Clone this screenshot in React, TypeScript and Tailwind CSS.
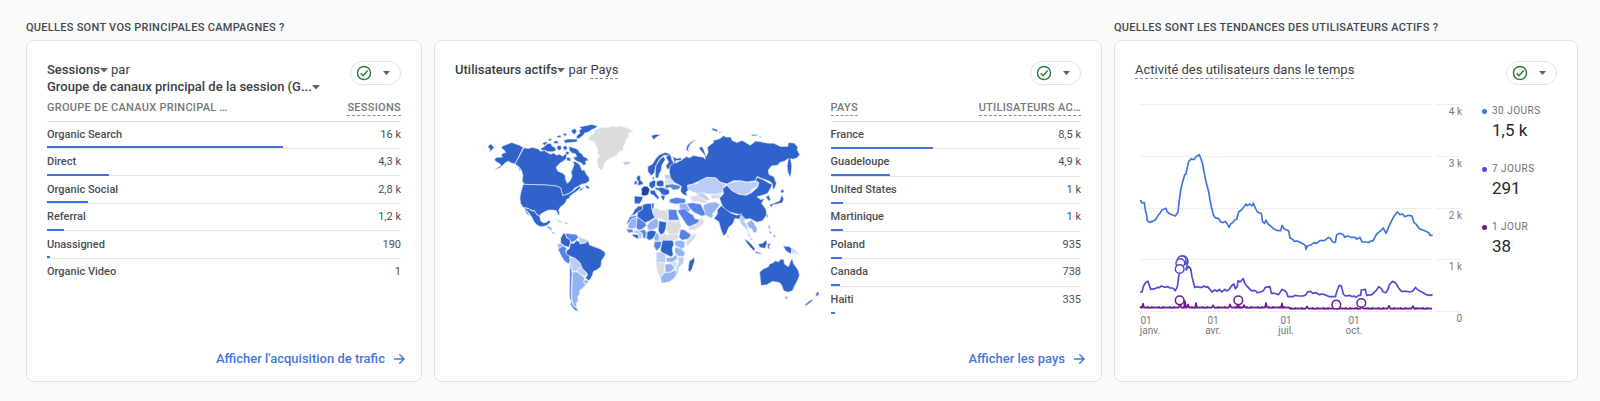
import type { ReactNode } from "react";

type Row = { label: string; value: string; share: number };

const channels: Row[] = [
  { label: "Organic Search", value: "16 k", share: 66.7 },
  { label: "Direct", value: "4,3 k", share: 17.5 },
  { label: "Organic Social", value: "2,8 k", share: 11.5 },
  { label: "Referral", value: "1,2 k", share: 4.8 },
  { label: "Unassigned", value: "190", share: 0.8 },
  { label: "Organic Video", value: "1", share: 0 },
];

const countries: Row[] = [
  { label: "France", value: "8,5 k", share: 41 },
  { label: "Guadeloupe", value: "4,9 k", share: 23.7 },
  { label: "United States", value: "1 k", share: 5 },
  { label: "Martinique", value: "1 k", share: 5 },
  { label: "Poland", value: "935", share: 4.7 },
  { label: "Canada", value: "738", share: 3.6 },
  { label: "Haiti", value: "335", share: 1.7 },
];

function Caret() {
  return (
    <svg viewBox="0 0 8 5" className="inline-block h-[5px] w-2 align-middle" aria-hidden="true">
      <path d="M0 0h8L4 4.5z" fill="#5f6368" />
    </svg>
  );
}

function StatusButton() {
  return (
    <button
      type="button"
      aria-label="Qualité des données"
      className="flex h-6 w-[51px] shrink-0 items-center justify-between rounded-full border border-[#dfe2e6] bg-white pr-[10px] pl-[5px]"
    >
      <svg viewBox="0 0 20 20" className="size-4" fill="none" stroke="#2e7d3e" strokeWidth="1.8" aria-hidden="true">
        <circle cx="10" cy="10" r="8.2" />
        <path d="M5.8 10.4l3 3 5.8-6.4" />
      </svg>
      <svg viewBox="0 0 7 4" className="h-1 w-[7px]" aria-hidden="true">
        <path d="M0 0h7L3.500 4z" fill="#5f6368" />
      </svg>
    </button>
  );
}

function FooterLink({ children }: { children: ReactNode }) {
  return (
    <a href="#" className="-mr-1 mt-auto flex items-center gap-2 self-end text-[13px] leading-4 font-medium text-[#4677dc]">
      {children}
      <svg viewBox="0 0 12 12" className="size-3" fill="none" stroke="currentColor" strokeWidth="1.400" aria-hidden="true">
        <path d="M1 6h9.800M6.300 1.300L11 6l-4.700 4.700" />
      </svg>
    </a>
  );
}

function DataTable({ rows, head, metric, dottedHead, tall }: { rows: Row[]; head: string; metric: string; dottedHead: boolean; tall: boolean }) {
  return (
    <table className={tall ? "h-[218px] w-full" : "h-[190px] w-full"}>
      <thead className="text-[11px] leading-[15px] tracking-wide text-[#74787c] uppercase">
        <tr className="h-[26px] border-b border-[#dcdfe3]">
          <th scope="col" className="text-left align-middle font-medium">
            <span className={dottedHead ? "inline-block border-b border-dashed border-[#8a8f94]" : "inline-block border-b border-transparent"}>{head}</span>
          </th>
          <th scope="col" className="text-right align-middle font-medium">
            <span className="inline-block border-b border-dashed border-[#8a8f94]">{metric}</span>
          </th>
        </tr>
      </thead>
      <tbody className="text-[11px] leading-4 text-[#4b4f53]">
        {rows.map((row, i) => (
          <tr key={row.label} className={i === rows.length - 1 ? "relative" : "relative border-b border-[#e2e4e8]"}>
            <th scope="row" className="text-left font-medium">
              {row.label}
              {row.share > 0 && (
                <span className="absolute -bottom-px left-0 h-[2px] bg-[#3f74dc]" style={{ width: `${row.share}%` }} />
              )}
            </th>
            <td className="text-right">{row.value}</td>
          </tr>
        ))}
      </tbody>
    </table>
  );
}

const DARK = "#2f63cb";
const NAVY = "#1d4596";
const MID = "#5482e6";
const SOFT = "#93b2f3";
const PALE = "#b9cdf8";
const NONE = "#dcdcdc";

/* Country outlines, grouped by map sector: [fill, path]. */
const northWest: [string, string][] = [
  [DARK, "M132 97L120 90 108 86 98 82 88 86 72 92 66 98 74 104 80 112 72 114 66 120 70 126 56 126 50 128 46 134 52 140 60 144 66 150 58 156 46 164 60 159 72 149 80 142 88 138 96 143 108 146Z"],
  [DARK, "M28 92L36 86 42 94 46 98 40 102 34 110 32 100 26 96Z"],
  [DARK, "M134 98L150 100 156 97 164 98 176 101 184 108 196 106 206 113 214 117 224 113 230 120 240 117 250 123 258 116 262 120 260 130 252 138 244 142 236 150 230 156 236 168 250 174 257 180 259 194 264 204 271 197 275 190 278 182 275 170 280 160 284 148 280 138 290 140 300 148 304 156 308 166 314 163 320 176 328 186 330 196 320 204 306 207 298 212 286 218 278 228 268 234 250 241 244 218 230 212 200 209 134 207 129 196 131 180 127 166 120 156 108 146Z"],
  [DARK, "M268 94L276 96 288 100 296 104 300 112 308 116 312 124 324 130 326 136 318 138 320 148 312 150 304 142 296 140 286 134 282 126 292 124 288 116 278 114 270 106Z"],
  [DARK, "M192 96L204 86 214 84 218 92 228 98 230 106 220 110 206 110 198 106 188 106 184 100Z"],
  [DARK, "M188 86L198 80 206 82 196 90Z M206 74L214 70 218 74 210 78Z M222 80L232 76 238 84 226 86Z M234 92L244 90 246 100 240 106 232 100Z M250 96L260 90 264 100 256 106Z M262 108L270 112 266 120 258 114Z M232 64L242 60 246 66 236 68Z M252 76L266 72 292 72 294 80 274 82 258 84Z M276 46L286 40 292 48 286 58 278 54Z M250 56L260 54 262 62 254 62Z M262 126L272 128 274 138 262 136Z"],
  [DARK, "M292 62L302 54 298 46 306 42 300 36 318 32 336 28 354 33 346 40 336 44 328 50 316 54 310 62 298 70 290 70Z"],
  [DARK, "M316 210L326 212 332 220 322 220Z M302 222L312 216 308 224 300 228Z M116 154L124 164 122 168Z"],
  [NONE, "M326 68L336 62 346 54 344 46 362 39 384 38 396 34 412 36 424 33 444 40 460 48 444 56 448 64 438 74 436 86 430 94 430 104 418 110 410 120 396 126 382 134 374 144 370 158 364 164 358 158 354 146 354 132 362 122 354 114 356 104 350 92 346 80 332 76Z"],
  [PALE, "M430 140L440 141 448 137 451 144 442 149 433 147Z"],
  [DARK, "M132 207L200 209 230 212 244 218 250 241 268 235 280 228 292 218 299 212 304 217 294 226 280 236 272 242 270 248 262 252 258 262 252 268 242 276 238 284 241 298 236 298 231 286 222 284 208 284 196 289 184 296 182 302 172 296 166 286 156 284 144 278 132 276 124 264 122 246 126 226Z"],
  [DARK, "M136 278L148 280 156 286 166 287 172 297 182 304 184 316 192 322 202 320 208 314 214 318 206 328 196 332 184 334 172 328 164 318 158 306 150 294 142 284 148 296 152 304 142 294Z"],
  [SOFT, "M200 334L208 332 218 338 216 346 208 340Z M214 348L224 350 228 356 220 354Z"],
  [SOFT, "M230 312L242 316 250 322 238 318Z M256 320L268 324 258 326Z"],
];

const southAmerica: [string, string][] = [
  [DARK, "M244 82L252 68 258 70 262 82 272 86 273 98 268 110 256 106 244 98Z"],
  [MID, "M258 68L274 70 290 71 297 80 288 90 276 96 271 86 262 80Z"],
  [SOFT, "M234 100L248 100 250 108 238 114Z"],
  [PALE, "M298 80L310 84 326 90 322 96 300 98Z"],
  [MID, "M236 116L250 106 262 112 258 124 270 134 272 152 268 160 254 150 244 132Z"],
  [DARK, "M273 98L284 98 290 90 298 92 302 100 318 97 326 91 330 103 346 109 362 115 376 124 377 133 366 150 364 168 352 177 342 182 338 196 328 210 318 202 324 192 320 184 310 176 302 158 290 146 276 138 262 132 260 122 270 114Z"],
  [PALE, "M272 140L286 142 300 154 306 168 294 176 288 182 278 180 272 162Z"],
  [PALE, "M292 180L306 170 312 178 322 188 316 196 304 190Z"],
  [SOFT, "M280 184L292 184 304 192 314 200 314 208 312 214 318 222 308 234 300 238 300 250 294 258 296 268 290 278 292 288 284 286 278 270 277 240 279 206Z"],
  [SOFT, "M316 206L328 212 320 220 313 213Z"],
  [MID, "M271 162L278 184 277 206 275 240 276 270 282 286 292 292 296 302 286 298 278 288 273 280 276 274 271 262 270 240 271 206Z"],
];

const africaWest: [string, string][] = [
  [DARK, "M450 302L460 294 464 284 476 272 490 272 488 282 474 290 464 298Z"],
  [DARK, "M488 268L502 264 514 264 516 276 519 292 526 306 510 316 496 322 472 303 474 291 489 281Z"],
  [DARK, "M515 263L523 264 522 276 517 282Z"],
  [NONE, "M520 278L534 280 546 287 563 282 566 316 560 318 544 309 526 308 519 292Z"],
  [MID, "M565 282L590 283 592 296 598 314 566 314Z"],
  [MID, "M440 326L450 304 470 300 470 306 456 310 448 322Z"],
  [SOFT, "M446 328L454 312 470 306 472 336 456 340 444 336Z"],
  [MID, "M472 304L497 323 500 330 488 340 478 344 470 338Z"],
  [SOFT, "M502 330L512 318 528 308 536 316 534 336 520 342 506 344Z"],
  [DARK, "M538 316L560 320 558 338 553 352 542 358 535 344Z"],
  [DARK, "M502 348L516 344 530 348 526 360 518 370 508 374 500 368Z"],
  [MID, "M440 340L458 342 462 350 446 352Z M478 346L494 342 500 350 498 368 490 368 488 354Z"],
  [PALE, "M464 344L476 344 486 354 486 368 478 370 476 356 464 352Z"],
  [DARK, "M462 356L476 358 476 370 466 366 456 358Z M498 352L502 352 500 370Z"],
  [NONE, "M564 318L598 318 604 330 598 346 594 354 566 354 560 342Z M564 357L594 356 596 368 580 376 566 368Z M540 362L558 354 570 372 550 376 540 374Z"],
  [MID, "M602 342L612 342 626 352 634 358 624 370 606 374 597 364Z"],
  [NONE, "M634 360L650 354 642 370 622 392 618 378 628 370Z"],
  [SOFT, "M528 356L534 350 538 362 538 376 526 376 522 368Z"],
  [MID, "M524 378L546 378 542 394 530 406 522 392Z"],
  [DARK, "M548 374L578 374 582 386 577 398 580 418 574 424 562 418 544 410 542 402Z"],
  [SOFT, "M584 378L596 374 614 378 614 394 606 400 586 390Z"],
  [SOFT, "M586 394L604 400 614 410 612 422 596 422 584 410Z"],
  [PALE, "M530 410L550 412 558 420 556 440 530 440Z"],
  [SOFT, "M560 426L576 426 590 416 592 430 576 440 560 438Z"],
  [PALE, "M594 424L612 426 610 442 596 456 594 474 588 474 590 456 596 440Z"],
  [NONE, "M576 442L590 438 590 450 584 458Z M528 442L554 442 552 472 542 484 534 468Z"],
  [SOFT, "M556 446L574 444 584 458 572 468 556 470Z"],
  [SOFT, "M542 486L554 472 572 470 586 462 590 476 582 488 568 498 546 502Z"],
  [DARK, "M628 436L638 430 643 424 644 436 636 460 630 468 624 464Z"],
];

const eurasia: [string, string][] = [
  [DARK, "M24 168L24 154 38 146 48 130 60 118 76 112 90 116 88 122 72 120 58 132 48 152 44 172 34 182Z"],
  [DARK, "M46 178L48 152 60 132 72 124 76 134 66 150 64 166 58 176 56 188 48 188Z"],
  [DARK, "M84 120L92 118 96 134 104 146 96 158 82 162 78 152 86 140 78 126Z"],
  [DARK, "M-6 180L2 182 2 194 10 202 10 208 -8 210 -4 200 -10 190Z M-16 198L-8 196 -8 206 -17 208Z"],
  [NAVY, "M4 220L14 212 24 214 30 222 26 238 14 242 4 238 6 228Z"],
  [DARK, "M-16 242L10 244 6 256 -2 266 -16 264Z"],
  [DARK, "M28 202L42 194 48 198 46 214 36 220 28 212Z"],
  [DARK, "M50 198L66 194 72 200 72 212 58 214 50 210Z"],
  [DARK, "M36 190L42 184 44 192Z M30 226L44 224 50 236 58 246 54 252 42 240 32 236Z"],
  [DARK, "M46 216L56 218 66 216 88 224 88 236 76 240 66 238 58 226 46 222Z M64 240L76 240 72 256 64 248Z"],
  [PALE, "M74 180L92 178 94 188 76 192Z"],
  [NONE, "M76 194L92 190 102 202 92 206 76 204Z"],
  [MID, "M76 208L98 206 124 212 116 222 100 224 92 216 76 220Z"],
  [MID, "M88 252L108 246 134 250 138 258 132 264 108 266 90 262Z"],
  [DARK, "M98 124L110 130 124 128 124 136 108 136 106 144 122 136 140 124 148 128 160 121 176 124 190 126 196 132 194 120 182 106 176 98 186 94 192 106 198 124 204 112 202 96 220 82 220 76 240 70 250 62 258 66 272 66 276 76 290 82 306 76 320 84 330 90 346 78 362 80 382 84 400 84 420 94 442 94 444 82 462 84 472 96 470 104 478 118 470 128 458 132 450 130 454 152 452 176 449 186 442 170 440 152 444 130 432 138 418 142 412 150 394 152 384 164 386 178 400 184 408 204 404 216 398 224 396 206 388 198 366 190 350 184 346 196 320 200 300 196 280 196 260 206 240 200 228 188 200 186 180 196 158 206 142 210 148 222 138 230 142 242 130 238 122 228 124 212 104 202 92 188 88 168 90 152 104 142Z"],
  [DARK, "M138 104L142 90 154 80 168 74 150 88 144 102 148 110Z M34 62L46 58 64 58 50 66 42 74Z M214 38L232 44 232 50 218 46Z M236 50L246 52 238 54Z M332 58L352 58 348 62 336 62Z M356 64L366 66 358 68Z"],
  [PALE, "M142 212L158 207 172 206 180 196 204 187 228 189 240 201 257 207 250 216 246 232 226 236 206 236 188 232 174 234 160 230 144 222Z"],
  [PALE, "M261 207L280 200 300 197 320 202 346 199 354 204 350 214 334 222 330 232 314 238 290 234 274 224Z"],
  [PALE, "M170 234L188 234 204 246 210 254 198 254 182 246Z"],
  [NONE, "M152 244L174 240 184 250 202 258 194 264 176 258 156 256Z M212 240L244 236 236 248 216 250Z"],
  [DARK, "M238 248L250 236 248 220 260 210 276 227 296 237 318 240 334 232 352 216 356 202 346 196 350 186 366 192 384 202 396 208 390 220 382 234 366 240 350 244 360 252 372 250 364 264 376 280 380 298 366 316 350 320 330 310 308 312 300 298 276 292 256 286 246 270Z"],
  [SOFT, "M118 264L138 264 150 284 146 290 130 284 120 282Z"],
  [MID, "M140 264L158 262 182 266 190 282 198 298 186 302 164 292 150 280Z"],
  [SOFT, "M190 270L206 262 226 260 240 268 228 282 216 296 220 300 214 308 198 300 192 284Z"],
  [DARK, "M424 222L432 226 426 234 420 230Z M424 238L430 250 426 262 410 266 398 268 392 276 388 268 404 262 418 256Z M376 244L386 240 390 252 386 258Z"],
];

const southEast: [string, string][] = [
  [MID, "M112 0L134 -6 146 6 160 14 164 24 180 28 172 38 150 48 142 46 130 28Z"],
  [NONE, "M146 52L168 42 180 32 182 22 192 32 186 44 166 56 148 60Z"],
  [DARK, "M222 24L232 10 232 -2 244 -14 256 -4 272 8 290 14 304 10 298 26 284 24 278 40 266 50 258 70 250 76 242 56 236 34Z M262 74L266 78 262 82Z"],
  [PALE, "M298 28L304 14 314 24 312 34 320 44 322 62 316 52 308 46 302 40Z"],
  [SOFT, "M320 38L334 28 342 40 350 54 348 66 340 66 334 54 326 52Z M322 64L330 76 326 78Z"],
  [DARK, "M312 86L322 90 334 102 344 114 342 122 328 108Z M344 122L360 126 364 130 348 128Z M354 100L366 98 378 88 380 98 374 114 358 110Z M382 100L392 98 386 108 390 116 382 112Z M428 106L446 108 454 114 452 130 438 122Z"],
  [MID, "M384 42L390 50 386 56Z M386 60L394 66 390 70Z M398 74L406 74 402 82Z M378 10L384 16 380 24Z M330 80L336 86 332 88Z"],
  [NONE, "M454 114L466 118 470 128 478 134 462 128 454 130Z"],
  [DARK, "M358 184L370 174 384 168 388 160 398 156 406 150 414 154 420 146 430 146 432 160 444 168 450 152 455 144 460 160 466 168 474 180 477 194 470 212 462 226 456 240 442 244 430 240 424 224 418 216 410 214 396 212 380 222 362 224 360 206Z"],
  [DARK, "M434 258L442 258 438 266Z"],
  [MID, "M526 246L534 242 536 252 526 258Z M492 282L506 270 520 264 512 274 498 284Z"],
];

function Shapes({ shapes, shift }: { shapes: [string, string][]; shift: string }) {
  return (
    <g transform={shift}>
      {shapes.map(([fill, d], i) => (
        <path key={i} d={d} fill={fill} />
      ))}
    </g>
  );
}

function WorldMap() {
  return (
    <svg viewBox="0 0 1032 615" className="w-full" role="img" aria-label="Utilisateurs actifs par pays">
      <g stroke="#dfe9fb" strokeWidth="2" strokeLinejoin="round">
        <Shapes shapes={northWest} shift="translate(0 0)" />
        <Shapes shapes={southAmerica} shift="translate(0 285)" />
        <Shapes shapes={africaWest} shift="translate(0 0)" />
        <Shapes shapes={eurasia} shift="translate(480 0)" />
        <Shapes shapes={southEast} shift="translate(480 285)" />
      </g>
    </svg>
  );
}

const line30 =
  "90,34 93,32 95,39 103,38 106,60 110,76 112,92 118,97 128,94 136,90 146,74 150,70 156,60 168,55 172,66 180,72 188,75 196,78 204,66 208,30 212,0 218,-25 224,-45 228,-48 232,-68 236,-85 244,-94 252,-91 258,-100 268,-106 272,-95 278,-78 282,-55 288,-25 296,5 300,30 304,50 310,75 316,83 326,86 332,96 340,98 346,94 352,102 357,112 362,102 368,98 374,90 380,88 386,66 394,60 402,50 408,42 412,47 420,42 426,48 430,40 436,54 442,66 448,68 454,70 458,96 464,100 468,90 474,102 482,108 490,116 500,121 512,122 516,106 522,116 536,122 540,144 548,148 552,154 562,153 572,158 580,162 586,166 588,178 592,168 604,164 612,158 620,160 630,152 644,151 656,142 662,146 668,156 676,157 680,134 690,130 700,134 704,142 712,138 724,142 736,142 740,148 750,142 756,156 768,156 776,158 784,152 788,154 800,132 810,124 820,114 828,130 838,106 850,82 862,66 870,74 878,72 884,80 896,76 906,78 912,98 920,104 928,116 938,120 948,124 956,128 960,136 968,136";
const line7 =
  "90,306 96,306 100,290 106,278 114,274 118,286 122,298 136,296 142,292 148,293 154,288 164,292 174,290 180,294 188,294 196,302 202,290 206,260 212,236 216,215 226,206 234,214 228,240 236,230 242,236 246,260 250,276 254,292 262,290 268,292 276,292 282,288 288,292 292,290 298,296 306,306 314,300 322,304 328,298 336,306 344,298 350,303 358,298 364,288 372,282 376,296 382,290 384,272 390,276 400,266 404,280 412,290 424,302 436,302 442,308 452,306 460,302 466,292 480,290 484,310 494,310 506,314 516,298 524,302 530,308 534,320 548,320 556,316 566,318 580,318 588,314 592,306 602,304 608,310 618,308 628,314 638,312 648,316 658,320 676,320 682,300 688,286 694,288 700,312 706,318 720,316 726,320 732,318 738,322 746,316 752,316 754,300 766,298 770,316 786,314 792,308 800,300 806,290 814,296 820,306 828,308 834,298 838,284 848,274 858,280 866,294 874,304 890,304 900,306 910,302 916,292 924,300 936,306 948,314 960,316 968,314";

/* Daily users: a flat baseline with a few one-day peaks. */
const peaks: Record<number, number> = { 99: 12, 210: 18, 225: 20, 234: 10, 258: 14, 309: 7, 360: 10, 384: 16, 402: 8, 468: 14, 516: 13, 591: 7, 678: 8, 756: 8, 837: 9, 909: 8 };
const line1 = Array.from({ length: 293 }, (_, i) => {
  const x = 90 + i * 3;
  const drift = x < 540 ? 353 : 356;
  return `${x},${drift - (peaks[x] ?? ((i * i * 7 + i * 3) % 11) / 3 - 1)}`;
}).join(" ");

function ActivityChart() {
  const grid: [number, string][] = [[9, "4 k"], [61, "3 k"], [113, "2 k"], [164, "1 k"], [216, "0"]];
  const months: [number, string][] = [[15, "janv."], [78, "avr."], [151, "juil."], [219, "oct."]];
  return (
    <svg viewBox="0 0 330 250" className="w-[330px] shrink-0" role="img" aria-label="Activité des utilisateurs dans le temps">
      {grid.map(([y, label]) => (
        <g key={label}>
          <path d={`M5 ${y + 0.5}H297M301 ${y + 0.5}H325`} stroke="#eceef0" />
          <text x="327" y={y + 11} textAnchor="end" className="text-[10px]" fill="#74787c">{label}</text>
        </g>
      ))}
      {months.map(([x, label]) => (
        <g key={label} textAnchor="middle" className="text-[10px]" fill="#74787c">
          <path d={`M${x === 15 ? 5.5 : x + 0.5} 216v4`} stroke="#e9ebee" />
          <text x={x === 15 ? 11 : x} y="229">01</text>
          <text x={x} y="239">{label}</text>
        </g>
      ))}
      <g transform="translate(-25 95) scale(0.33333)" fill="none" strokeWidth="5" strokeLinejoin="round">
        <polyline points={line30} stroke="#3f74dc" />
        <polyline points={line7} stroke="#5249d4" />
        <polyline points={line1} stroke="#6a1b8f" />
        <g fill="#fff" stroke="#5249d4" strokeWidth="4.500">
          <circle cx="220" cy="211" r="13" />
          <circle cx="215" cy="211" r="13" />
          <circle cx="211" cy="219" r="13" />
          <circle cx="209" cy="237" r="13" />
        </g>
        <g fill="#fff" stroke="#6a1b8f" strokeWidth="4.500">
          <circle cx="209" cy="331" r="13" />
          <circle cx="385" cy="331" r="13" />
          <circle cx="679" cy="344" r="13" />
          <circle cx="754" cy="339" r="13" />
        </g>
      </g>
    </svg>
  );
}

function Legend({ dot, label, value }: { dot: string; label: string; value: string }) {
  return (
    <div>
      <dt className="flex items-center gap-[5px] text-[10px] leading-4 tracking-wider whitespace-nowrap text-[#6b7075]">
        <span className={`size-[5px] rounded-full ${dot}`} />
        {label}
      </dt>
      <dd className="pl-[10px] text-[17px] leading-[22px] text-[#25282b]">{value}</dd>
    </div>
  );
}

const card = "flex flex-1 flex-col rounded-lg border border-[#dfe2e6] bg-white px-5 pt-5 pb-[14px]";
const heading = "h-5 text-[11px] leading-4 font-medium tracking-wide whitespace-nowrap text-[#45494d] uppercase";

export default function App() {
  return (
    <main className="grid min-h-screen grid-cols-[396fr_668fr_464fr] gap-3 bg-[#f9fafc] pt-5 pr-[22px] pb-[19px] pl-[26px] font-['Roboto',sans-serif] text-[#3c4043]">
      <section className="flex min-w-0 flex-col">
        <h2 className={heading}>Quelles sont vos principales campagnes ?</h2>
        <div className={card}>
          <div className="flex justify-between">
            <h3 className="h-[34px] min-w-0 text-[13px] leading-[17px] whitespace-nowrap">
              <button type="button" className="font-medium">Sessions<Caret /></button> par
              <br />
              <button type="button" className="font-medium">Groupe de canaux principal de la session (G...<Caret /></button>
            </h3>
            <StatusButton />
          </div>
          <DataTable rows={channels} head="Groupe de canaux principal …" metric="Sessions" dottedHead={false} tall={false} />
          <FooterLink>Afficher l'acquisition de trafic</FooterLink>
        </div>
      </section>

      <section className="flex min-w-0 flex-col pt-5">
        <div className={card}>
          <div className="flex justify-between">
            <h3 className="h-[34px] text-[13px] leading-[17px] whitespace-nowrap">
              <button type="button" className="font-medium">Utilisateurs actifs<Caret /></button>{" "}
              par <span className="inline-block border-b border-dashed border-[#8a8f94] leading-4">Pays</span>
            </h3>
            <StatusButton />
          </div>
          <div className="flex">
            <div className="min-w-0 flex-1 pt-5 pr-[6px] pl-6">
              <WorldMap />
            </div>
            <div className="w-2/5">
              <DataTable rows={countries} head="Pays" metric="Utilisateurs ac…" dottedHead tall />
            </div>
          </div>
          <FooterLink>Afficher les pays</FooterLink>
        </div>
      </section>

      <section className="flex min-w-0 flex-col">
        <h2 className={heading}>Quelles sont les tendances des utilisateurs actifs ?</h2>
        <div className={card}>
          <div className="flex justify-between">
            <h3 className="h-[34px] text-[13px] leading-[17px] whitespace-nowrap">
              <span className="inline-block border-b border-dashed border-[#8a8f94]">Activité des utilisateurs dans le temps</span>
            </h3>
            <StatusButton />
          </div>
          <div className="flex gap-[17px]">
            <ActivityChart />
            <dl className="flex flex-col gap-5 pt-2">
              <Legend dot="bg-[#3f74dc]" label="30 JOURS" value="1,5 k" />
              <Legend dot="bg-[#5249d4]" label="7 JOURS" value="291" />
              <Legend dot="bg-[#6a1b8f]" label="1 JOUR" value="38" />
            </dl>
          </div>
        </div>
      </section>
    </main>
  );
}
